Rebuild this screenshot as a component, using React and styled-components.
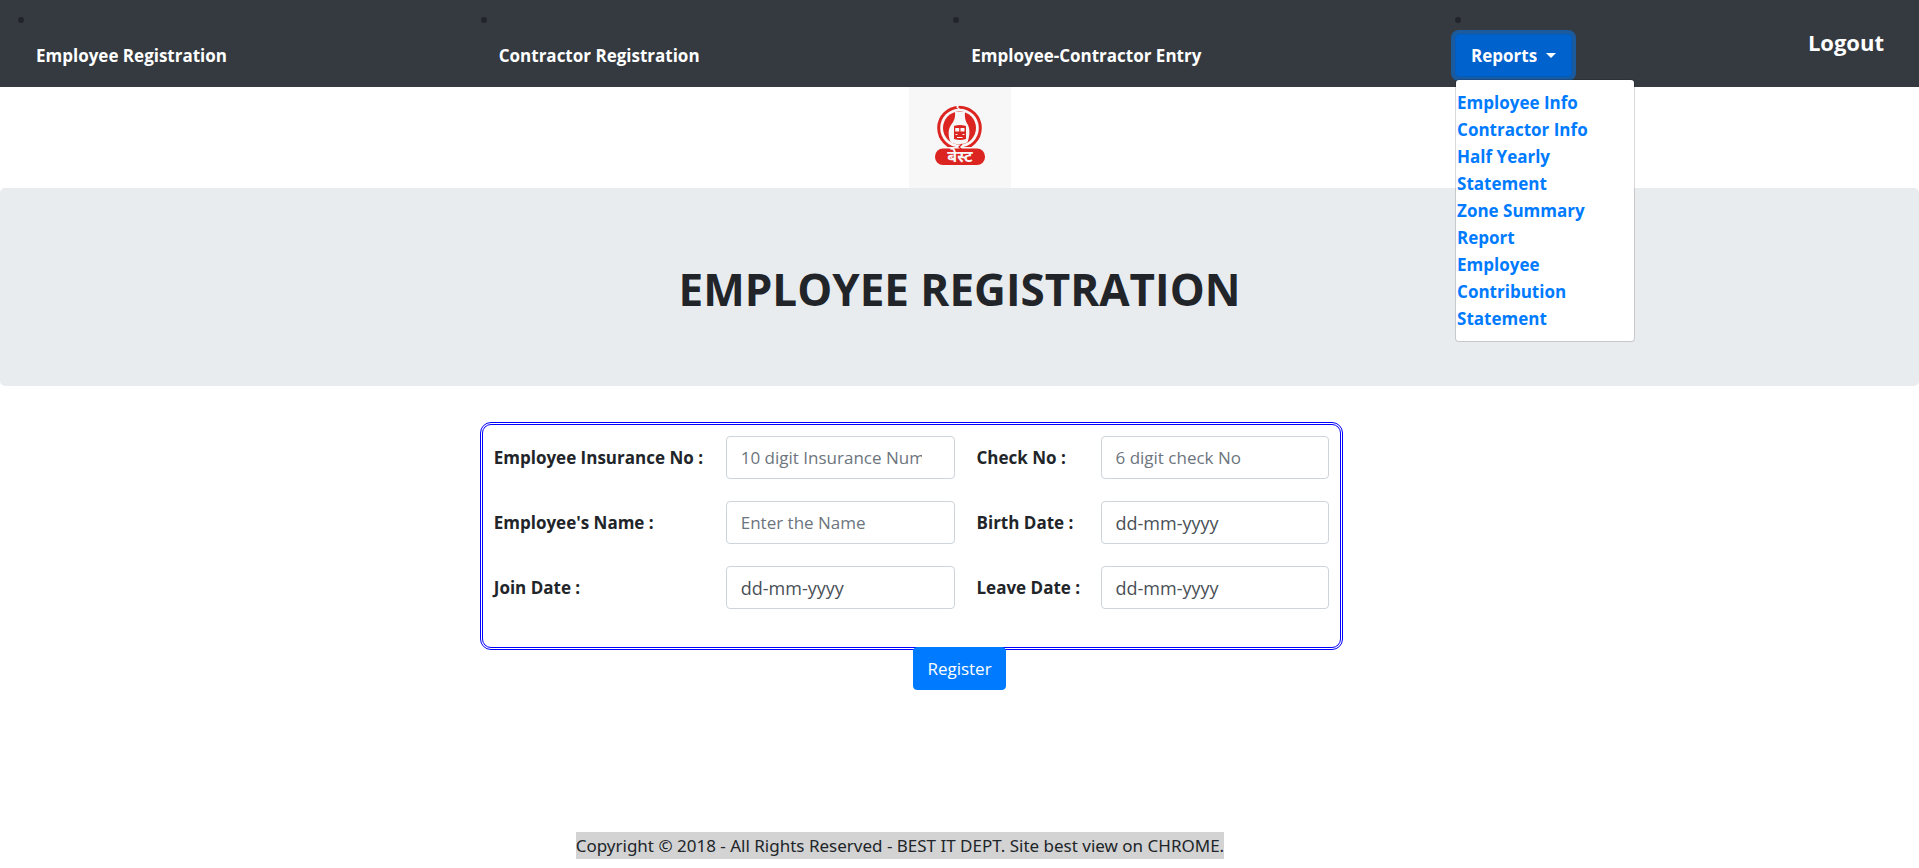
import React from "react";
import styled, { createGlobalStyle } from "styled-components";

const GlobalStyle = createGlobalStyle`
  *, *::before, *::after { box-sizing: border-box; }
  body {
    margin: 0;
    background: #fff;
    color: #212529;
    font: 400 17px/27px "Open Sans", "Noto Sans", sans-serif;
  }
`;

const Navbar = styled.nav`
  background: #343a40;
  padding: 7px 18px 10px;
`;

const NavList = styled.ul`
  display: flex;
  justify-content: space-between;
  align-items: center;
  margin: 0;
  padding: 0;
  list-style: none;
`;

const NavItem = styled.li`
  position: relative;
  &::before {
    content: "";
    display: block;
    width: 6px;
    height: 6px;
    margin: 10px 0 11px;
    border-radius: 50%;
    background: #212529;
  }
`;

const NavLink = styled.a`
  display: block;
  padding: 8px 18px;
  color: #fff;
  font-weight: 700;
  text-decoration: none;
  white-space: nowrap;
`;

const LogoutLink = styled.a`
  display: block;
  padding-right: 17px;
  color: #fff;
  font-weight: 700;
  font-size: 22px;
  text-decoration: none;
`;

const ReportsButton = styled.button`
  display: flex;
  align-items: center;
  gap: 9px;
  height: 43px;
  padding: 0 15px;
  border: 1px solid #005cbf;
  border-radius: 4px;
  background: #0062cc;
  box-shadow: 0 0 0 4px rgba(0, 123, 255, 0.5);
  color: #fff;
  font: inherit;
  font-weight: 700;
  &::after {
    content: "";
    border: 5px solid transparent;
    border-top-color: #fff;
    border-bottom: 0;
  }
`;

const Menu = styled.div`
  position: absolute;
  z-index: 2;
  top: calc(100% + 2px);
  left: 0;
  width: 180px;
  padding: 9px 27px 9px 1px;
  border: 1px solid rgba(0, 0, 0, 0.15);
  border-radius: 4px;
  background: #fff;
  background-clip: padding-box;
`;

const MenuLink = styled.a`
  display: block;
  color: #007bff;
  font-weight: 700;
  text-decoration: none;
`;

const LogoRow = styled.header`
  display: flex;
  justify-content: center;
`;

const LogoBox = styled.div`
  width: 102px;
  height: 101px;
  background: #f7f7f7;
  svg { display: block; }
`;

const Jumbotron = styled.section`
  padding: 74px 36px 70px;
  border-radius: 5px;
  background: #e9ecef;
  text-align: center;
`;

const Title = styled.h1`
  margin: 0;
  font-size: 44px;
  line-height: 54px;
  font-weight: 700;
`;

const Form = styled.form`
  display: flex;
  flex-direction: column;
  align-items: center;
  margin-top: 36px;
`;

const FieldBox = styled.div`
  align-self: flex-start;
  width: 45%;
  min-width: 800px;
  margin-left: 25%;
  padding-bottom: 27px;
  border: 3px double #0000ff;
  border-radius: 11px;
`;

const FieldGrid = styled.div`
  display: grid;
  grid-template-columns: 210px 1fr 102px 1fr;
  gap: 22px;
  align-items: center;
  padding: 11px;
`;

const Label = styled.label`
  font-weight: 700;
  white-space: nowrap;
`;

const Input = styled.input`
  width: 100%;
  min-width: 0;
  height: 43px;
  padding: 0 ${(p) => (p.$wideInset ? 32 : 14)}px 0 14px;
  border: 1px solid #ced4da;
  border-radius: 4px;
  background: #fff;
  color: #495057;
  font: inherit;
  font-size: ${(p) => (p.$date ? 18 : 17)}px;
  &::placeholder {
    color: ${(p) => (p.$date ? "#495057" : "#6c757d")};
    opacity: 1;
  }
`;

const RegisterButton = styled.button`
  height: 43px;
  margin-top: -3px;
  padding: 0 13px;
  border: 1px solid #007bff;
  border-radius: 4px;
  background: #007bff;
  color: #fff;
  font: inherit;
`;

const Footer = styled.footer`
  display: flex;
  padding: 142px 0 9px 30%;
`;

const Copyright = styled.span`
  background: #d3d3d3;
  font-family: "Noto Sans", sans-serif;
`;

const links = [
  "Employee Registration",
  "Contractor Registration",
  "Employee-Contractor Entry",
];

const reports = [
  "Employee Info",
  "Contractor Info",
  "Half Yearly Statement",
  "Zone Summary Report",
  "Employee Contribution Statement",
];

const fields = [
  { id: "insurance", label: "Employee Insurance No :", hint: "10 digit Insurance Number" },
  { id: "check", label: "Check No :", hint: "6 digit check No" },
  { id: "name", label: "Employee's Name :", hint: "Enter the Name" },
  { id: "birth", label: "Birth Date :", hint: "dd-mm-yyyy", date: true },
  { id: "join", label: "Join Date :", hint: "dd-mm-yyyy", date: true },
  { id: "leave", label: "Leave Date :", hint: "dd-mm-yyyy", date: true },
];

function Logo() {
  return (
    <svg width="102" height="101" viewBox="0 0 102 101" role="img" aria-label="BEST">
      <circle cx="50.5" cy="41" r="20.8" fill="none" stroke="#dc2520" strokeWidth="3" />
      <circle cx="50.5" cy="41" r="16.5" fill="#dc2520" />
      <path d="M51 17l-3 3 3 3" fill="none" stroke="#f7f7f7" strokeWidth="1.3" />
      {/* road and bus */}
      <path d="M46 25h10c-.5 6 .5 9 3 13 2 4 2 11-.5 17-4 3-13 3-17 0-2.500-6-2.500-13 .5-17 3-4 4.500-7 4-13z" fill="#f7f7f7" />
      <path d="M45 39q6-2 12 0v13q-6 2-12 0z" fill="#dc2520" />
      <path d="M46.200 41h4v3.500h-4zM51.500 41h4v3.500h-4zM46.500 47h2v1h-2zM53.500 47h2v1h-2zM48 50h5.500v1H48z" fill="#f7f7f7" />
      <rect x="25" y="60" width="51" height="19" rx="9.500" fill="#f7f7f7" />
      <rect x="26" y="61.500" width="50" height="16.500" rx="8" fill="#dc2520" />
      <path d="M53 57l-3 3 3 3" fill="none" stroke="#dc2520" strokeWidth="1.3" />
      <text x="51" y="75" textAnchor="middle" fill="#f7f7f7" fontFamily="'Noto Sans', 'Noto Sans Devanagari', sans-serif" fontSize="16" fontWeight="700">बेस्ट</text>
    </svg>
  );
}

export default function App() {
  return (
    <>
      <GlobalStyle />
      <Navbar>
        <NavList>
          {links.map((text) => (
            <NavItem key={text}><NavLink href="#">{text}</NavLink></NavItem>
          ))}
          <NavItem>
            <ReportsButton type="button" aria-expanded="true">Reports</ReportsButton>
            <Menu>
              {reports.map((text) => <MenuLink key={text} href="#">{text}</MenuLink>)}
            </Menu>
          </NavItem>
          <li><LogoutLink href="#">Logout</LogoutLink></li>
        </NavList>
      </Navbar>
      <LogoRow><LogoBox><Logo /></LogoBox></LogoRow>
      <main>
        <Jumbotron><Title>EMPLOYEE REGISTRATION</Title></Jumbotron>
        <Form onSubmit={(e) => e.preventDefault()}>
          <FieldBox>
            <FieldGrid>
              {fields.map((f) => (
                <React.Fragment key={f.id}>
                  <Label htmlFor={f.id}>{f.label}</Label>
                  <Input id={f.id} type="text" placeholder={f.hint} $date={f.date} $wideInset={f.id === "insurance"} />
                </React.Fragment>
              ))}
            </FieldGrid>
          </FieldBox>
          <RegisterButton type="submit">Register</RegisterButton>
        </Form>
      </main>
      <Footer>
        <Copyright>Copyright © 2018 - All Rights Reserved - BEST IT DEPT. Site best view on CHROME.</Copyright>
      </Footer>
    </>
  );
}
